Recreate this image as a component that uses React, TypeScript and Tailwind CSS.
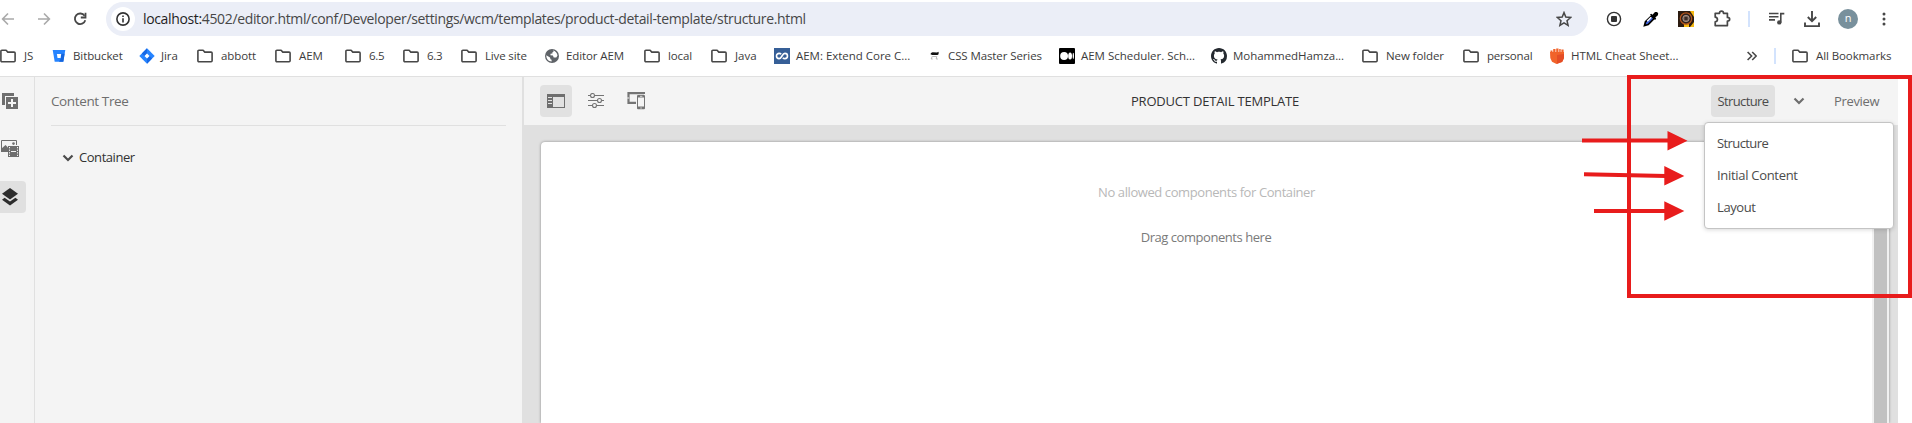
import React from "react";

function Folder() {
  return (
    <svg width="16" height="14" viewBox="0 0 16 14" className="shrink-0" fill="none" stroke="#474747" strokeWidth="1.6" strokeLinejoin="round">
      <path d="M.9 11.6V2.2a1 1 0 0 1 1-1h4.2l1.7 1.9h6.3a1 1 0 0 1 1 1v7.6a1 1 0 0 1-1 1H1.9a1 1 0 0 1-1-1.1Z" />
    </svg>
  );
}

function Bitbucket() {
  return (
    <svg width="16" height="16" viewBox="0 0 16 16" className="shrink-0">
      <path d="M1.7 2h12.6l-2 11.8H3.7Z" fill="#2684ff" />
      <path d="M8 13.8h4.3l1.3-8H10v4.4Z" fill="#1565dd" />
      <path d="M5.9 5.9h4.3l-.6 4.2H6.5Z" fill="#fff" />
    </svg>
  );
}

function Jira() {
  return (
    <svg width="16" height="16" viewBox="0 0 16 16" className="shrink-0">
      <path d="M8 .3 15.7 8 8 15.7.3 8Z" fill="#2684ff" />
      <path d="M8 .3v5.2L5.5 8 2.9 5.4ZM8 15.7v-5.2L10.5 8l2.6 2.6Z" fill="#1768e5" />
      <path d="m8 5.5 2.5 2.5L8 10.5 5.5 8Z" fill="#fff" />
    </svg>
  );
}

function Globe() {
  return (
    <svg width="16" height="16" viewBox="0 0 16 16" className="shrink-0">
      <circle cx="8" cy="8" r="7" fill="#5f6368" />
      <path d="M2.3 7.3 6 9.5l.5 1.7 1.1.5v1.9C4.5 13.4 2.2 11 2.3 7.3ZM8.8 2.4c2.5.4 4.5 2.5 4.7 5l-1.2 2.2-2.6-.2-.8-1.9-2.5-.3.2-1.4 1.8-.2V4.2l1.3-.4Z" fill="#fff" />
    </svg>
  );
}

function Loop() {
  return (
    <svg width="16" height="16" viewBox="0 0 16 16" className="shrink-0">
      <path d="M0 0h16v16H0z" fill="#365f97" />
      <path d="M7.2 6.3C6.7 5.7 6 5.4 5.100 5.400a2.600 2.600 0 0 0 0 5.200c2.800 0 3-5.200 5.800-5.200a2.600 2.600 0 0 1 0 5.200c-.9 0-1.600-.3-2.100-.9" fill="none" stroke="#fff" strokeWidth="1.600" />
    </svg>
  );
}

function Goat() {
  return (
    <svg width="16" height="16" viewBox="0 0 16 16" className="shrink-0">
      <path d="m5 5 1.500-.7 4.500.3 1.600-.8v2.400l-1.200.8H6.200L4.500 6.200Z" fill="#111" />
      <path d="M6.300 8.200 5.200 11h1.500M10.800 8.200l-.6 2.800h1.700M6.500 8.500h4" fill="none" stroke="#aaa" strokeWidth=".8" />
    </svg>
  );
}

function Medium() {
  return (
    <svg width="16" height="16" viewBox="0 0 16 16" className="shrink-0">
      <rect width="16" height="16" rx="1" fill="#000" />
      <circle cx="5.100" cy="8" r="3.900" fill="#fff" />
      <ellipse cx="11.100" cy="8" rx="1.900" ry="3.600" fill="#fff" />
      <ellipse cx="14.300" cy="8" rx=".7" ry="3.200" fill="#fff" />
    </svg>
  );
}

function Github() {
  return (
    <svg width="16" height="16" viewBox="0 0 16 16" className="shrink-0">
      <path fill="#24292f" d="M8 0C3.580 0 0 3.580 0 8c0 3.540 2.290 6.530 5.470 7.590.4.070.55-.17.55-.38 0-.19-.01-.82-.01-1.490-2.010.37-2.530-.49-2.690-.94-.09-.23-.48-.94-.82-1.130-.28-.15-.68-.52-.01-.53.63-.01 1.080.58 1.230.82.72 1.210 1.870.87 2.330.66.07-.52.28-.87.51-1.070-1.780-.2-3.640-.89-3.640-3.950 0-.87.31-1.590.82-2.150-.08-.2-.36-1.020.08-2.120 0 0 .67-.21 2.200.82.640-.18 1.320-.27 2-.27s1.360.09 2 .27c1.530-1.040 2.200-.82 2.200-.82.44 1.100.16 1.920.08 2.120.51.56.82 1.270.82 2.150 0 3.070-1.870 3.750-3.650 3.950.29.25.54.73.54 1.480 0 1.070-.01 1.930-.01 2.200 0 .21.15.46.55.38A8.010 8.010 0 0 0 16 8c0-4.420-3.580-8-8-8Z" />
    </svg>
  );
}

function Fist() {
  return (
    <svg width="16" height="16" viewBox="0 0 16 16" className="shrink-0">
      <path d="M1 4h14v6l-1.800 4L7.500 16 3 13.800 1.300 10Z" fill="#f1632a" />
      <path d="M1.500 2.500h2V5h-2zM4.200 1h2.300v4H4.200zM7.200.4h2.300V5H7.200zM10.200 1h1.500v4h-1.500zM12.400 1.600h2.200V5h-2.200z" fill="#f1632a" />
      <path d="M8 7v8.800l5.200-2L15 10V6Z" fill="#e44d26" />
    </svg>
  );
}

const bookmarks: { label: string; icon: React.ReactNode; box: string; text: string }[] = [
  { label: "JS", icon: <Folder />, box: "w-[51px] gap-2", text: "tracking-[-0.1px]" },
  { label: "Bitbucket", icon: <Bitbucket />, box: "w-[88px] gap-1.5", text: "tracking-[-0.1px]" },
  { label: "Jira", icon: <Jira />, box: "w-[58px] gap-1.5", text: "tracking-[-0.1px]" },
  { label: "abbott", icon: <Folder />, box: "w-[78px] gap-2", text: "tracking-[-0.1px]" },
  { label: "AEM", icon: <Folder />, box: "w-[70px] gap-2", text: "tracking-[-0.1px]" },
  { label: "6.5", icon: <Folder />, box: "w-[58px] gap-2", text: "tracking-[-0.3px]" },
  { label: "6.3", icon: <Folder />, box: "w-[58px] gap-2", text: "tracking-[-0.3px]" },
  { label: "Live site", icon: <Folder />, box: "w-[83px] gap-2", text: "tracking-[-0.15px]" },
  { label: "Editor AEM", icon: <Globe />, box: "w-[100px] gap-1.5", text: "tracking-[-0.1px]" },
  { label: "local", icon: <Folder />, box: "w-[67px] gap-2", text: "tracking-[-0.1px]" },
  { label: "Java", icon: <Folder />, box: "w-[63px] gap-2", text: "tracking-[0px]" },
  { label: "AEM: Extend Core C...", icon: <Loop />, box: "w-[152px] gap-1.5", text: "tracking-[-0.02px]" },
  { label: "CSS Master Series", icon: <Goat />, box: "w-[133px] gap-1.5", text: "tracking-[-0.1px]" },
  { label: "AEM Scheduler. Sch...", icon: <Medium />, box: "w-[152px] gap-1.5", text: "tracking-[-0.02px]" },
  { label: "MohammedHamza...", icon: <Github />, box: "w-[151px] gap-1.5", text: "tracking-[-0.05px]" },
  { label: "New folder", icon: <Folder />, box: "w-[101px] gap-2", text: "tracking-[-0.1px]" },
  { label: "personal", icon: <Folder />, box: "w-[86px] gap-2", text: "tracking-[-0.2px]" },
  { label: "HTML Cheat Sheet...", icon: <Fist />, box: "w-[198px] gap-1.5", text: "tracking-[-0.02px]" },
];

function AddressBar() {
  return (
    <div className="flex h-[38px] items-center">
      <svg width="106" height="34" viewBox="0 0 106 34" className="shrink-0" fill="none" strokeWidth="1.600">
        <path d="M14 17H3M8 11.500 2.600 17 8 22.500M38 17h11M44 11.500l5.400 5.500-5.400 5.500" stroke="#a9a9a9" />
        <path d="M84.600 13.800A5.300 5.300 0 1 0 85.300 18.300" stroke="#474747" strokeWidth="1.800" />
        <path d="M85.500 10.800v4.700h-4.700" stroke="#474747" strokeWidth="1.800" />
      </svg>
      <div className="flex h-[34px] w-[1482px] shrink-0 items-center rounded-full bg-[#ebeef7] pl-[5px] pr-4">
        <div className="flex size-6 items-center justify-center rounded-full bg-white">
          <svg width="14" height="14" viewBox="0 0 14 14">
            <circle cx="7" cy="7" r="6.100" fill="none" stroke="#333" strokeWidth="1.600" />
            <path d="M7 6.200v4.200M7 3.500v1.500" stroke="#333" strokeWidth="1.600" />
          </svg>
        </div>
        <div className="ml-2 grow whitespace-nowrap text-[14px] leading-5 tracking-[-0.355px] text-[#474747]">
          <span className="text-[#1f1f1f]">localhost:</span>4502/editor.html/conf/Developer/settings/wcm/templates/product-detail-template/structure.html
        </div>
        <svg width="16" height="16" viewBox="0 0 16 16" fill="none" stroke="#474747" strokeWidth="1.500">
          <path d="m8 1.600 1.800 4.500 4.900.4-3.700 3.200 1.100 4.700L8 11.900l-4.100 2.500L5 9.700 1.300 6.500l4.900-.4Z" />
        </svg>
      </div>
      <div className="flex items-center pl-[18px]">
        <svg width="16" height="16" viewBox="0 0 16 16">
          <circle cx="8" cy="8" r="6.600" fill="none" stroke="#333" strokeWidth="1.400" />
          <rect x="5" y="5" width="6" height="6" rx="1" fill="#333" />
        </svg>
        <svg width="16" height="16" viewBox="0 0 16 16" className="ml-[21px]">
          <path d="M1.500 14.500 2.500 10.800 8.500 5l2.600 2.600-5.900 5.900Z" fill="#3c5fd8" stroke="#000" strokeWidth="1.700" />
          <path d="m4.200 10.200 4-4" stroke="#fff" strokeWidth="1.500" />
          <path d="m7 3.600 1.200-.8 1.300 1L12 1l2 0 1.200 1.300-.3 1.900-2.600 2.300.9 1.300L12 9Z" fill="#000" />
        </svg>
        <svg width="16" height="16" viewBox="0 0 16 16" className="ml-[19px]">
          <path d="M0 0h16v16H0z" fill="#2b1b10" />
          <path d="M12 0h4v6zM16 11v5h-4zM6 12h5v4H6z" fill="#f6b913" />
          <circle cx="8" cy="7.500" r="5.700" fill="#2d211c" stroke="#b5551c" strokeWidth="1.200" />
          <circle cx="8" cy="7.500" r="3.200" fill="#76635b" stroke="#b59a8c" strokeWidth=".8" />
          <path d="M6.500 6h3v3h-3z" fill="#3b2b25" />
        </svg>
        <svg width="18" height="18" viewBox="0 0 18 18" className="ml-[19px]" fill="none" stroke="#474747" strokeWidth="1.700">
          <path d="M2.200 3.300h4.300c0-3 4-3 4 0h3.900v4.100c3 0 3 3.700 0 3.700v4.500H2.200v-3.800c3-.3 3-4.300 0-4.600Z" strokeLinejoin="round" />
        </svg>
        <div className="ml-[17px] h-4 w-0.5 bg-[#d3e3fd]" />
        <svg width="18" height="16" viewBox="0 0 18 16" className="ml-[18px]" fill="none" stroke="#474747" strokeWidth="1.600">
          <path d="M1 2.500h9.500M1 5.700h9.500M1 8.900h6M12.800 11.500V2.600h3.500" />
          <circle cx="11.300" cy="11.400" r="2.200" fill="#474747" stroke="none" />
        </svg>
        <svg width="18" height="18" viewBox="0 0 18 18" className="ml-[17px]" fill="none" stroke="#474747" strokeWidth="1.900">
          <path d="M9 1v10M4.800 7 9 11.200 13.200 7M2 12.500v3.600h14v-3.600" />
        </svg>
        <div className="ml-[17px] flex size-5 items-center justify-center rounded-full bg-[#78909c] pb-px text-[11px] text-white">n</div>
        <svg width="4" height="16" viewBox="0 0 4 16" className="ml-6" fill="#474747">
          <circle cx="2" cy="3" r="1.500" />
          <circle cx="2" cy="8" r="1.500" />
          <circle cx="2" cy="13" r="1.500" />
        </svg>
      </div>
    </div>
  );
}

function BookmarksBar() {
  return (
    <div className="flex h-[38px] items-center whitespace-nowrap pb-0.5 text-[11.5px] text-[#3c3c3c]">
      {bookmarks.map((b) => (
        <div key={b.label} className={`flex shrink-0 items-center ${b.box}`}>
          {b.icon}
          <span className={b.text}>{b.label}</span>
        </div>
      ))}
      <svg width="10" height="10" viewBox="0 0 10 10" fill="none" stroke="#474747" strokeWidth="1.600" className="shrink-0">
        <path d="m.6 1 4 4-4 4M5.200 1l4 4-4 4" />
      </svg>
      <div className="ml-[17px] mr-4 h-4 w-0.5 shrink-0 bg-[#d3e3fd]" />
      <div className="flex items-center gap-2">
        <Folder />
        <span className="tracking-[-0.1px]">All Bookmarks</span>
      </div>
    </div>
  );
}

function Chevron({ color }: { color: string }) {
  return (
    <svg width="12" height="8" viewBox="0 0 12 8" fill="none" stroke={color} strokeWidth="2.200" className="shrink-0">
      <path d="m1.500 1.500 4.500 4.500 4.500-4.500" />
    </svg>
  );
}

function Rail() {
  return (
    <div className="flex w-[35px] shrink-0 flex-col border-r border-[#e0e0e0]">
      <div className="flex h-12 w-[26px] items-center pl-0.5">
        <svg width="16" height="16" viewBox="0 0 16 16" fill="#6e6e6e">
          <path d="M0 0h12v3H3v9H0Z" />
          <path fillRule="evenodd" d="M4 4h12v12H4Zm5 2v3H6v2h3v3h2v-3h3V9h-3V6Z" />
        </svg>
      </div>
      <div className="flex h-12 w-[26px] items-center pl-px">
        <svg width="18" height="18" viewBox="0 0 18 18">
          <path d="M.5 11V.500h15V5" fill="none" stroke="#6e6e6e" />
          <path d="M0 12V9l4.500-4L7 7.500V12Z" fill="#6e6e6e" />
          <circle cx="12.500" cy="3.600" r="1.300" fill="#6e6e6e" />
          <path d="M7 6h11v11H7z" fill="#6e6e6e" />
          <path d="M10 11.500h5" stroke="#f4f4f4" strokeWidth="1" />
          <path d="M8.500 7v9M16.500 7v9" stroke="#f4f4f4" strokeWidth="1" strokeDasharray="1.300 1.300" />
        </svg>
      </div>
      <div className="mt-2 flex h-8 w-[26px] items-center rounded-r bg-[#e0e0e0] pl-0.5">
        <svg width="16" height="18" viewBox="0 0 16 18" fill="#2c2c2c">
          <path d="M8 0 16 5.800 8 11.500 0 5.800Z" />
          <path d="M2.600 9.800 8 13.600l5.400-3.800L16 11.700 8 17.600 0 11.700Z" />
        </svg>
      </div>
    </div>
  );
}

function ContentTree() {
  return (
    <div className="flex w-[487px] shrink-0 flex-col pl-4 pr-4">
      <div className="flex h-[49px] items-center border-b border-[#e0e0e0] pt-px text-[13.500px] tracking-[-0.38px] text-[#6e6e6e]">Content Tree</div>
      <div className="mt-4 flex h-8 items-center gap-[5px] pl-[11px] text-[13px] tracking-[-0.45px] text-[#323232]">
        <Chevron color="#4b4b4b" />
        Container
      </div>
    </div>
  );
}

function Toolbar() {
  return (
    <div className="flex h-12 shrink-0 items-center bg-[#f4f4f4] pl-4">
      <div className="flex w-[591px] shrink-0 items-center">
        <div className="flex size-8 items-center justify-center rounded bg-[#e1e1e1]">
          <svg width="18" height="14" viewBox="0 0 18 14">
            <path fillRule="evenodd" d="M0 0h18v14H0ZM6 3v10h11V3Z" fill="#6e6e6e" />
            <path d="M1 3.500h4M1 6.500h4M1 9.500h4" stroke="#e1e1e1" />
          </svg>
        </div>
        <svg width="16" height="16" viewBox="0 0 16 16" className="ml-4" fill="#f4f4f4" stroke="#747474" strokeWidth="1.100">
          <path d="M0 2.500h16M0 7.500h16M0 12.500h16" />
          <circle cx="4.500" cy="2.500" r="2" />
          <circle cx="11.500" cy="7.500" r="2" />
          <circle cx="6.500" cy="12.500" r="2" />
        </svg>
        <svg width="18" height="18" viewBox="0 0 18 18" className="ml-[23px]">
          <path d="M17 2V1.200H1.500v9.600H9" fill="none" stroke="#747474" strokeWidth="2.200" />
          <path d="M.2 6h2" stroke="#f4f4f4" />
          <rect x="10" y="3" width="8" height="14.300" rx="1" fill="#747474" />
          <path d="M11 5.500h6v9h-6z" fill="#f4f4f4" />
          <path d="M13 4.300h2.400M13.300 16h1.500" stroke="#f4f4f4" strokeWidth=".8" />
        </svg>
      </div>
      <span className="w-[580px] shrink-0 whitespace-nowrap pt-0.5 text-[13px] tracking-[-0.2px] text-[#323232]">PRODUCT DETAIL TEMPLATE</span>
      <div className="flex h-8 w-16 items-center justify-center rounded bg-[#e1e1e1] pt-px text-[13px] tracking-[-0.6px] text-[#4b4b4b]">Structure</div>
      <div className="ml-[18px]">
        <Chevron color="#6e6e6e" />
      </div>
      <span className="ml-[29px] pt-px text-[13px] tracking-[-0.35px] text-[#6e6e6e]">Preview</span>
    </div>
  );
}

const modes = [
  { label: "Structure", text: "tracking-[-0.6px]" },
  { label: "Initial Content", text: "tracking-[-0.3px]" },
  { label: "Layout", text: "tracking-[-0.4px]" },
];

function ModeMenu() {
  return (
    <div className="absolute left-[1704px] top-[122px] flex h-[107px] w-[190px] flex-col rounded border border-[#c4c4c4] bg-white pl-3 pt-[5px] text-[13px] text-[#4b4b4b] shadow-[0_1px_4px_rgba(0,0,0,0.15)]">
      {modes.map((m) => (
        <div key={m.label} className={`flex h-8 items-center ${m.text}`}>{m.label}</div>
      ))}
    </div>
  );
}

function Annotations() {
  return (
    <>
      <div className="absolute left-[1627px] top-[75px] h-[223px] w-[285px] border-4 border-[#e81c1c]" />
      <svg width="110" height="96" viewBox="0 0 110 96" className="absolute left-[1580px] top-[128px]" fill="#e81c1c" stroke="#e81c1c">
        <path d="M2 12.600h87M4 46.300l82 1.600M14 83h72" strokeWidth="4" />
        <path d="M87.500 3v19.500l20-9.750ZM84.300 38v19.500l20-9.500ZM84.300 73.200v19.600l20-9.800Z" stroke="none" />
      </svg>
    </>
  );
}

export default function App() {
  return (
    <div className="relative flex h-[423px] w-[1912px] flex-col overflow-hidden bg-white font-['Open_Sans','Noto_Sans',sans-serif]">
      <AddressBar />
      <BookmarksBar />
      <div className="flex min-h-0 w-[1898px] grow border-t border-[#e0e0e0] bg-[#f4f4f4]">
        <Rail />
        <ContentTree />
        <div className="flex grow flex-col border-l-2 border-[#e0e0e0] bg-[#e0e0e0]">
          <Toolbar />
          <div className="flex grow pl-[17px] pr-[9px] pt-4">
            <div className="mt-px flex grow rounded-t bg-white shadow-[0_0_3px_rgba(0,0,0,0.4)]">
              <div className="flex grow flex-col items-center pt-[35px] text-[13px]">
                <div className="flex h-8 items-center tracking-[-0.41px] text-[#b8b8b8]">No allowed components for Container</div>
                <div className="mt-[13px] flex h-8 items-center pr-px tracking-[-0.45px] text-[#7a7a7a]">Drag components here</div>
              </div>
              <div className="flex w-[17px] justify-center bg-[#f1f1f1]">
                <div className="w-[13px] bg-[#c1c1c1]" />
              </div>
            </div>
          </div>
        </div>
      </div>
      <ModeMenu />
      <Annotations />
    </div>
  );
}
